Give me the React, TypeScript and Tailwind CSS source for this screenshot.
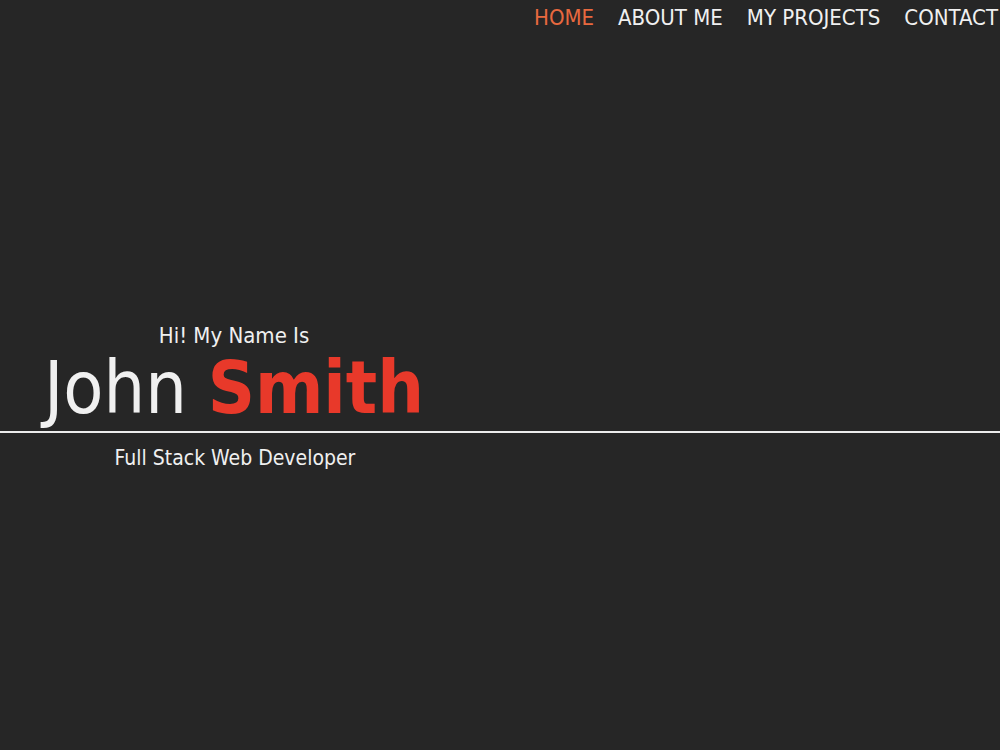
export default function App() {
  const links = ["HOME", "ABOUT ME", "MY PROJECTS", "CONTACT"];

  return (
    <div className="min-h-[750px] w-full overflow-hidden bg-[#262626] font-['DejaVu_Sans_Condensed','DejaVu_Sans',sans-serif] text-[#f0f0f0]">
      {/* Top nav */}
      <nav className="flex h-[34px] items-center gap-[24px] whitespace-nowrap pl-[534px] text-[22px]">
        {links.map((l, i) => (
          <a
            key={l}
            href="#"
            className={i === 0 ? "text-[#e8693f]" : "text-[#f0f0f0]"}
          >
            {l}
          </a>
        ))}
      </nav>

      {/* Hero */}
      <header className="mt-[288px]">
        <div className="w-[468px] text-center">
          <p className="text-[22px] leading-[28px]">Hi! My Name Is</p>
          <h1 className="text-[73px] leading-[76px]">
            John <span className="font-bold text-[#e8392a]">Smith</span>
          </h1>
        </div>
        <div className="mt-[5px] h-[2px] w-full bg-[#ececec]" />
        <p className="mt-[11px] w-[470px] text-center text-[21px] leading-[28px]">
          Full Stack Web Developer
        </p>
      </header>
    </div>
  );
}
